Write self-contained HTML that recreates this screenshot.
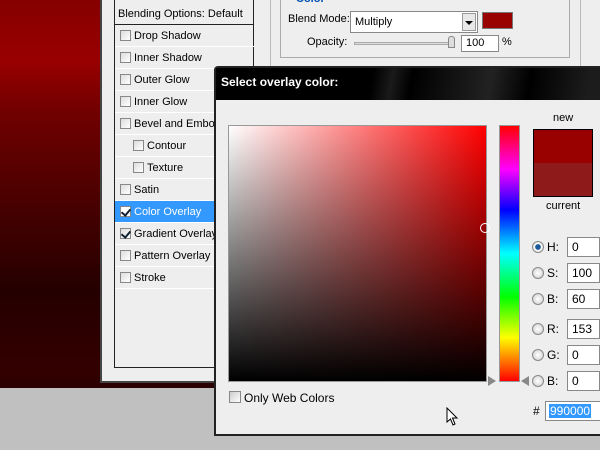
<!DOCTYPE html>
<html><head><style>
*{margin:0;padding:0;box-sizing:border-box}
body{width:600px;height:450px;overflow:hidden;position:relative;background:#c0c0c0;font-family:"Liberation Sans",sans-serif;font-size:11px;color:#000}
.a{position:absolute}
.bg{left:0;top:0;width:600px;height:388px;background:linear-gradient(#860000 0px,#990000 60px,#720000 110px,#4a0000 200px,#250000 290px,#330000 370px,#2a0000 388px)}
.panel{left:100px;top:-5px;width:500px;height:388px;background:#eeeeee;border:2px solid #444;border-right:none}
.list{left:114px;top:-2px;width:140px;height:370px;border:1px solid #222;border-top:none;background:#eeeeee}
.row{position:absolute;left:0;width:139px;height:22px;border-bottom:1px solid #fff;line-height:22px;padding-left:19px;white-space:nowrap}
.row .cb{position:absolute;left:5px;top:5px;width:11px;height:11px;border:1px solid #888;background:linear-gradient(135deg,#ddd,#fff)}
.row.sub{padding-left:32px}.row.sub .cb{left:18px}
.sel{background:#3399ff;color:#fff}
.cbk::after{content:"";position:absolute;left:2px;top:0px;width:4px;height:7px;border:solid #123;border-width:0 2px 2px 0;transform:rotate(40deg)}
.inp{background:#fff;border:1px solid #888;height:20px;line-height:18px;padding-left:4px;font-size:12px}
.rad{width:12px;height:12px;border-radius:50%;border:1px solid #888;background:radial-gradient(#fff,#ccc)}
</style></head><body>
<div class="a bg"></div>
<div class="a panel"></div>
<div class="a" style="left:114px;top:3px;width:140px;height:1px;background:#222"></div>
<div class="a list">
 <div class="row" style="top:5px;border-bottom:1px solid #222;height:22px;padding-left:3px">Blending Options: Default</div>
 <div class="row" style="top:27px"><span class="cb"></span>Drop Shadow</div>
 <div class="row" style="top:49px"><span class="cb"></span>Inner Shadow</div>
 <div class="row" style="top:71px"><span class="cb"></span>Outer Glow</div>
 <div class="row" style="top:93px"><span class="cb"></span>Inner Glow</div>
 <div class="row" style="top:115px"><span class="cb"></span>Bevel and Emboss</div>
 <div class="row sub" style="top:137px"><span class="cb"></span>Contour</div>
 <div class="row sub" style="top:159px"><span class="cb"></span>Texture</div>
 <div class="row" style="top:181px"><span class="cb"></span>Satin</div>
 <div class="row sel" style="top:203px"><span class="cb cbk" style="background:#fff"></span>Color Overlay</div>
 <div class="row" style="top:225px"><span class="cb cbk"></span>Gradient Overlay</div>
 <div class="row" style="top:247px"><span class="cb"></span>Pattern Overlay</div>
 <div class="row" style="top:269px"><span class="cb"></span>Stroke</div>
</div>
<div class="a" style="left:270px;top:0;width:1px;height:70px;background:#bbb"></div>
<div class="a" style="left:580px;top:0;width:1px;height:70px;background:#bbb"></div>
<div class="a" style="left:280px;top:-5px;width:290px;height:63px;border:1px solid #aaa"></div>
<div class="a" style="left:296px;top:-7px;color:#0050b0;font-weight:bold">Color</div>
<div class="a" style="left:288px;top:13px">Blend Mode:</div>
<div class="a inp" style="left:350px;top:11px;width:128px;height:22px;font-size:11px;line-height:20px">Multiply</div>
<div class="a" style="left:462px;top:13px;width:14px;height:18px;background:#e8e8e8;border:1px solid #999"><div style="margin:7px auto 0;width:0;height:0;border-left:4px solid transparent;border-right:4px solid transparent;border-top:4px solid #000"></div></div>
<div class="a" style="left:482px;top:12px;width:31px;height:17px;background:#990000;border:1px solid #777"></div>
<div class="a" style="left:307px;top:36px">Opacity:</div>
<div class="a" style="left:354px;top:42px;width:100px;height:3px;border:1px solid #aaa;background:#ddd"></div>
<div class="a" style="left:448px;top:36px;width:7px;height:12px;background:#ddd;border:1px solid #888;border-radius:3px 3px 0 0"></div>
<div class="a inp" style="left:461px;top:35px;width:38px;height:17px;line-height:15px;font-size:11px">100</div>
<div class="a" style="left:502px;top:36px">%</div>

<div class="a" style="left:214px;top:66px;width:400px;height:370px;background:#eeeeee;border:2px solid #222;border-radius:4px 0 0 0"></div>
<div class="a" style="left:216px;top:68px;width:390px;height:32px;background:linear-gradient(100deg,#000 40%,#1a1a1a 45%,#000 50%,#222 70%,#000 80%,#1c1c1c 95%)"></div>
<div class="a" style="left:221px;top:75px;color:#fff;font-weight:bold;font-size:12px">Select overlay color:</div>
<div class="a" style="left:228px;top:125px;width:259px;height:257px;border:1px solid #999;background:linear-gradient(to bottom,rgba(0,0,0,0),#000),linear-gradient(to right,#fff,#ff0000)"></div>
<div class="a" style="left:480px;top:223px;width:10px;height:10px;border:1px solid #fff;border-radius:50%"></div>
<div class="a" style="left:499px;top:125px;width:21px;height:257px;border:1px solid #999;background:linear-gradient(#ff0000,#ff00ff 17%,#0000ff 33%,#00ffff 50%,#00ff00 67%,#ffff00 83%,#ff0000)"></div>
<div class="a" style="left:488px;top:376px;width:0;height:0;border-top:5px solid transparent;border-bottom:5px solid transparent;border-left:8px solid #888"></div>
<div class="a" style="left:521px;top:376px;width:0;height:0;border-top:5px solid transparent;border-bottom:5px solid transparent;border-right:8px solid #888"></div>
<div class="a" style="left:553px;top:112px">new</div>
<div class="a" style="left:533px;top:129px;width:60px;height:68px;border:1px solid #000;background:linear-gradient(#990000 50%,#8e1a1a 50%)"></div>
<div class="a" style="left:546px;top:200px">current</div>

<div class="a rad" style="left:532px;top:241px;background:radial-gradient(#1a5a9a 35%,#fff 45%,#ccc)"></div><div class="a" style="left:547px;top:240px;font-size:12px">H:</div><div class="a inp" style="left:567px;top:237px;width:33px">0</div>
<div class="a rad" style="left:532px;top:267px"></div><div class="a" style="left:547px;top:266px;font-size:12px">S:</div><div class="a inp" style="left:567px;top:263px;width:33px">100</div>
<div class="a rad" style="left:532px;top:293px"></div><div class="a" style="left:547px;top:292px;font-size:12px">B:</div><div class="a inp" style="left:567px;top:289px;width:33px">60</div>
<div class="a rad" style="left:532px;top:323px"></div><div class="a" style="left:547px;top:322px;font-size:12px">R:</div><div class="a inp" style="left:567px;top:319px;width:33px">153</div>
<div class="a rad" style="left:532px;top:349px"></div><div class="a" style="left:547px;top:348px;font-size:12px">G:</div><div class="a inp" style="left:567px;top:345px;width:33px">0</div>
<div class="a rad" style="left:532px;top:375px"></div><div class="a" style="left:547px;top:374px;font-size:12px">B:</div><div class="a inp" style="left:567px;top:371px;width:33px">0</div>
<div class="a" style="left:533px;top:404px;font-size:12px">#</div>
<div class="a inp" style="left:545px;top:401px;width:57px;padding-left:3px"><span style="background:#3399ff;color:#fff;padding:0 1px">990000</span></div>
<div class="a" style="left:229px;top:391px;width:12px;height:12px;border:1px solid #888;background:linear-gradient(135deg,#ccc,#fff)"></div>
<div class="a" style="left:244px;top:391px;font-size:12px">Only Web Colors</div>
<svg class="a" style="left:446px;top:407px" width="14" height="20"><path d="M1 1 L1 15 L4.5 12 L7 18 L9 17 L6.5 11 L11 11 Z" fill="#fff" stroke="#000" stroke-width="1"/></svg>
</body></html>
